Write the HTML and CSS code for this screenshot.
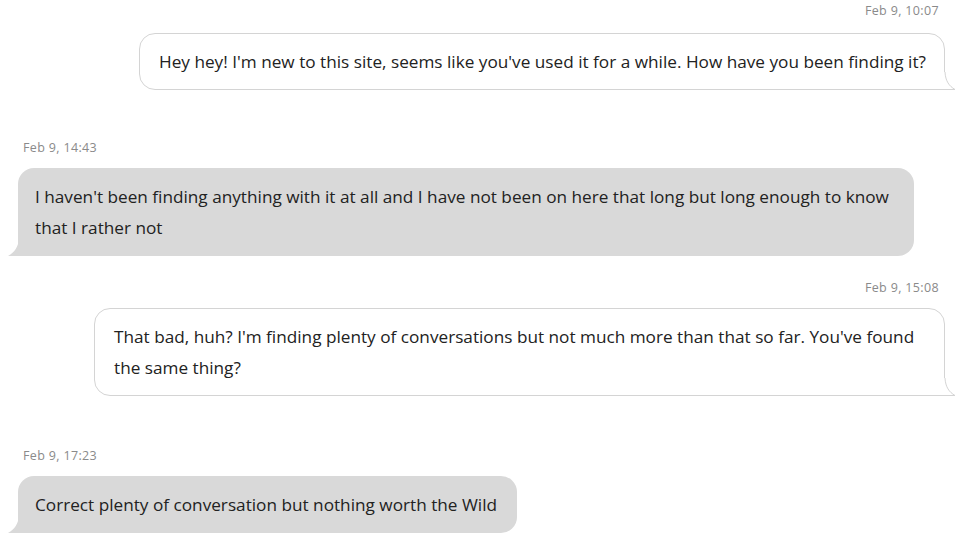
FILE: index.html
```html
<!DOCTYPE html>
<html lang="en">
<head>
<meta charset="utf-8">
<title>Chat</title>
<link rel="stylesheet" href="styles.css">
</head>
<body>
<main class="chat">
  <section class="msg sent first">
    <div class="stamp">Feb 9, 10:07</div>
    <div class="bubble">Hey hey! I'm new to this site, seems like you've used it for a while. How have you been finding it?<svg class="tail" viewBox="0 0 12 18" width="12" height="18"><path d="M0 0 L1 0 C1.5 9 5 14 11 17.5 L0 17.5 Z" fill="#fff"/><path d="M1 0 C1.5 9 5 14 11 17.5 L0 17.5" fill="none" stroke="#d4d4d4" stroke-width="1"/></svg></div>
  </section>
  <section class="msg recv gap-big">
    <div class="stamp">Feb 9, 14:43</div>
    <div class="bubble">I haven't been finding anything with it at all and I have not been on here that long but long enough to know that I rather not<svg class="tail" viewBox="0 0 11 17" width="11" height="17"><path d="M11 0 C10 8 7 13 0 17 L11 17 Z" fill="#d9d9d9"/></svg></div>
  </section>
  <section class="msg sent gap-small">
    <div class="stamp">Feb 9, 15:08</div>
    <div class="bubble wide">That bad, huh? I'm finding plenty of conversations but not much more than that so far. You've found the same thing?<svg class="tail" viewBox="0 0 12 18" width="12" height="18"><path d="M0 0 L1 0 C1.5 9 5 14 11 17.5 L0 17.5 Z" fill="#fff"/><path d="M1 0 C1.5 9 5 14 11 17.5 L0 17.5" fill="none" stroke="#d4d4d4" stroke-width="1"/></svg></div>
  </section>
  <section class="msg recv gap-big last">
    <div class="stamp">Feb 9, 17:23</div>
    <div class="bubble">Correct plenty of conversation but nothing worth the Wild<svg class="tail" viewBox="0 0 11 17" width="11" height="17"><path d="M11 0 C10 8 7 13 0 17 L11 17 Z" fill="#d9d9d9"/></svg></div>
  </section>
</main>
</body>
</html>
```

FILE: styles.css
```css
html, body {
  margin: 0;
  padding: 0;
  background: #ffffff;
}

body {
  font-family: "Open Sans", "Noto Sans", "Liberation Sans", sans-serif;
  color: #222222;
  width: 960px;
  height: 542px;
  overflow: hidden;
}

.chat {
  display: flex;
  flex-direction: column;
  padding: 3px 15px 0 18px;
}

.msg {
  display: flex;
  flex-direction: column;
}

.msg.sent {
  align-items: flex-end;
}

.msg.recv {
  align-items: flex-start;
}

.gap-big {
  margin-top: 50px;
}

.gap-big.last {
  margin-top: 52px;
}

.gap-small {
  margin-top: 24px;
}

.stamp {
  font-size: 12.5px;
  line-height: 16px;
  letter-spacing: 0.35px;
  color: #8a8a8a;
  margin-bottom: 12px;
}

.first .stamp {
  margin-bottom: 14px;
}

.sent .stamp {
  margin-right: 6px;
}

.recv .stamp {
  margin-left: 5px;
}

.bubble {
  position: relative;
  font-size: 17.2px;
  line-height: 31px;
  box-sizing: border-box;
}

.sent .bubble {
  background: #ffffff;
  border: 1px solid #d4d4d4;
  border-radius: 16px 16px 0 16px;
  padding: 12px 18px 12px 19px;
  max-width: 808px;
}

.sent .bubble.wide {
  max-width: 851px;
}

.recv .bubble {
  background: #d9d9d9;
  border-radius: 16px 16px 16px 0;
  padding: 13px 20px 13px 17px;
  max-width: 896px;
}

.tail {
  position: absolute;
  bottom: -1px;
  display: block;
}

.sent .tail {
  right: -12px;
}

.recv .tail {
  left: -10px;
  bottom: 0;
}
```
